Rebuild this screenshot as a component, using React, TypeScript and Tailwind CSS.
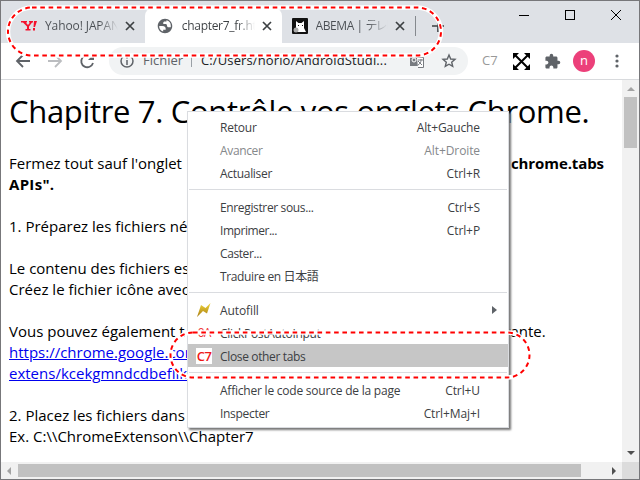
import React from "react";

type Item = { label: string; keys?: string; dim?: boolean; icon?: React.ReactNode; arrow?: boolean; hot?: boolean; ls: string };

const Bolt = () => (
  <svg width="16" height="16" viewBox="0 0 16 16">
    <defs><linearGradient id="gold" x1="0" x2="0" y1="0" y2="1"><stop stopColor="#f0d63c" /><stop offset="1" stopColor="#a87c12" /></linearGradient></defs>
    <path d="M5 3 9.500 6 14.500 1 11 11.500 7 9 1 15 5 3Z" fill="url(#gold)" />
  </svg>
);

const groups: Item[][] = [
  [
    { label: "Retour", keys: "Alt+Gauche", ls: "tracking-[-0.2px]" },
    { label: "Avancer", keys: "Alt+Droite", dim: true, ls: "tracking-[-0.35px]" },
    { label: "Actualiser", keys: "Ctrl+R", ls: "tracking-[-0.3px]" },
  ],
  [
    { label: "Enregistrer sous...", keys: "Ctrl+S", ls: "tracking-[-0.36px]" },
    { label: "Imprimer...", keys: "Ctrl+P", ls: "tracking-[-0.45px]" },
    { label: "Caster...", ls: "tracking-[-0.4px]" },
    { label: "Traduire en 日本語", ls: "tracking-[-0.36px]" },
  ],
  [
    { label: "Autofill", icon: <Bolt />, arrow: true, ls: "tracking-[-0.1px]" },
    { label: "ClickPostAutoInput", icon: <span className="text-[12px] tracking-[-1px] text-[#e33]">0A</span>, ls: "tracking-[-0.32px]" },
    { label: "Close other tabs", icon: <span className="flex h-4 w-4 items-center justify-center bg-white text-[13px] font-semibold leading-4 tracking-[-0.5px] text-[#f01818]">C7</span>, hot: true, ls: "tracking-[-0.35px]" },
  ],
  [
    { label: "Afficher le code source de la page", keys: "Ctrl+U", ls: "tracking-[-0.22px]" },
    { label: "Inspecter", keys: "Ctrl+Maj+I", ls: "tracking-[-0.3px]" },
  ],
];

function Menu() {
  return (
    <div className="absolute left-[186px] top-[110px] w-[322px] border border-[#dadce0] bg-white py-[3px] text-[12px] text-[#3c4043] shadow-[2px_2px_2px_#777]">
      {groups.map((g, i) => (
        <div key={i}>
          {i > 0 && <div className="mx-px h-[11px] pt-[5px]"><div className="h-px bg-[#dadce0]" /></div>}
          {g.map((it) => (
            <div key={it.label} className={`flex h-[23px] items-center pr-[28px] leading-[19px] ${it.hot ? "bg-[#c6c6c6]" : ""} ${it.dim ? "text-[#85888b]" : ""}`}>
              <span className="ml-2 flex w-4 shrink-0 justify-center">{it.icon}</span>
              <span className={`ml-2 whitespace-nowrap pt-px ${it.ls}`}>{it.label}</span>
              <span className="ml-auto whitespace-nowrap pt-px tracking-[-0.1px]">{it.keys}</span>
              {it.arrow && <svg className="-mr-[18px]" width="6" height="8"><path d="M0 0 5 4 0 8Z" fill="#5f6368" /></svg>}
            </div>
          ))}
        </div>
      ))}
    </div>
  );
}

const Cross = ({ className = "" }) => (
  <svg className={`shrink-0 ${className}`} width="10" height="10"><path d="M1 1 9 9M9 1 1 9" stroke="#3c4043" strokeWidth="1.7" /></svg>
);

const Globe = () => (
  <svg className="shrink-0" width="16" height="16" viewBox="1 1 22 22"><path fill="#5f6368" d="M12 2C6.48 2 2 6.48 2 12s4.48 10 10 10 10-4.48 10-10S17.52 2 12 2zM4 12h4.400c3.407.022 4.922 1.730 4.543 5.127H9.488v2.470A8.003 8.003 0 0 1 4 12zm16 0c0 .61-.07 1.210-.2 1.780h-2.600c-1.600 0-2.500-.9-2.500-2.500 0-1.100-.8-1.900-2-1.900H9.600V7.700c0-1.200.8-2 2-2h2.400V4.250A8 8 0 0 1 20 12z" /></svg>
);

function Tabs() {
  return (
    <div className="flex h-[42px] items-end bg-[#dee1e6]">
      <div className="flex h-[35px] w-[144px] items-center rounded-br-[8px] pl-[20px]">
        <svg className="shrink-0" width="16" height="10" viewBox="0 0 16 10"><path d="M0 0h6v1.500H4.800L7 4 9 1.500H8V0h4v1.500h-1L8 5.500V8h1.500v1.500h-5V8H6V5.500L2 1.500H0ZM13 0h3l-2 6h-1.500ZM12 7h2v2.500h-2Z" fill="#f5102c" /></svg>
        <span className="ml-2 w-[73px] overflow-hidden whitespace-nowrap bg-linear-to-r from-[#4a4e53] from-75% to-transparent bg-clip-text text-[12px] tracking-[-0.1px] text-transparent">Yahoo! JAPAN</span>
        <Cross className="ml-[7px]" />
      </div>
      <div className="flex h-[35px] w-[137px] items-center rounded-t-[8px] bg-white pl-[12px]">
        <Globe />
        <span className="ml-[9px] w-[73px] overflow-hidden whitespace-nowrap bg-linear-to-r from-[#3c4043] from-75% to-transparent bg-clip-text text-[12px] tracking-[-0.3px] text-transparent">chapter7_fr.html</span>
        <Cross className="ml-[7px]" />
      </div>
      <div className="flex h-[35px] w-[134px] items-center pl-[10px]">
        <svg className="shrink-0" width="16" height="16"><rect width="16" height="16" rx="1" fill="#111" /><path d="M4 3 6.500 5h3L12 3v7l2 4H3l1-4Z" fill="#fff" /><path d="M6 7h1v1H6zm4 0h1v1h-1z" fill="#111" /><circle cx="4" cy="12" r="2.500" fill="#aaa" /></svg>
        <span className="ml-2 w-[72px] overflow-hidden whitespace-nowrap bg-linear-to-r from-[#4a4e53] from-70% to-transparent bg-clip-text text-[12px] tracking-[-0.4px] text-transparent">ABEMA | <span className="tracking-[-2px]">テレビ</span></span>
        <Cross className="ml-[7px]" />
      </div>
      <div className="mb-[7px] h-5 w-px bg-[#85898e]" />
      <svg className="mb-[11px] ml-4" width="12" height="12"><path d="M6 0V12M0 6H12" stroke="#3c4043" strokeWidth="1.700" /></svg>
      <svg className="mb-[18px] ml-[75px]" width="120" height="18" fill="none" stroke="#000" shapeRendering="crispEdges"><path d="M0 8.500H10M46.500 3.500h9v9h-9Z" /><path d="m92 3 10 10m0-10L92 13" shapeRendering="auto" /></svg>
    </div>
  );
}

function Toolbar() {
  return (
    <div className="flex h-[37px] items-center border-b border-[#d8dadd] bg-white pl-[13px]">
      <svg className="shrink-0" width="86" height="18" fill="none" stroke="#5f6368" strokeWidth="1.800"><path d="M16 9H3M9 3 3 9l6 6" /><path d="M34 9h13m-6-6 6 6-6 6" stroke="#bbbdc0" /><path d="M77.500 5A6 6 0 1 0 79 11" /><path d="M80 2v6h-6Z" fill="#5f6368" stroke="none" /></svg>
      <div className="ml-[9px] flex h-7 w-[359px] shrink-0 items-center rounded-full bg-[#f1f3f4] pl-[11px] text-[13px] text-[#202124]">
        <svg className="shrink-0" width="14" height="14" fill="none" stroke="#5f6368" strokeWidth="1.500"><circle cx="7" cy="7" r="6" /><path d="M7 6v5M7 3v1.500" /></svg>
        <span className="ml-[9px] w-[41px] text-[#5f6368]">Fichier</span>
        <span className="ml-[7px] h-3 w-px bg-[#9aa0a6]" />
        <span className="ml-[9px] w-[188px] whitespace-nowrap tracking-[0.12px]">C:/Users/norio/AndroidStudi...</span>
        <svg className="ml-[20px] shrink-0" width="16" height="15"><path d="M1 1h7l3 11H1Z" fill="#777b80" /><path d="M8 3.500h6.500v10H9" fill="#fff" stroke="#777b80" /><path d="M9 6h5m-2-1v1c0 2-1 4-3 5m0-4 4 4" stroke="#777b80" fill="none" /><circle cx="5" cy="6" r="2" fill="none" stroke="#fff" /></svg>
        <svg className="ml-[16px] shrink-0" width="16" height="16" fill="none" stroke="#5f6368" strokeWidth="1.400"><path d="m8 2 1.700 4 4.300.4-3.300 2.800 1 4.200L8 11.200l-3.700 2.200 1-4.200L2 6.400 6.300 6Z" /></svg>
      </div>
      <span className="ml-[14px] w-4 text-[13px] text-[#999]">C7</span>
      <svg className="ml-[15px] shrink-0" width="17" height="17"><path d="M2 2 15 15M15 2 2 15" stroke="#000" strokeWidth="2" /><path d="M0 0h6L0 6ZM17 0v6l-6-6ZM0 17v-6l6 6ZM17 17h-6l6-6Z" /></svg>
      <svg className="ml-[14px] shrink-0" width="17" height="17" viewBox="0 0 24 24"><path fill="#5f6368" d="M20.500 11H19V7c0-1.100-.9-2-2-2h-4V3.500a2.500 2.500 0 0 0-5 0V5H4c-1.100 0-1.990.9-1.990 2v3.800H3.500c1.490 0 2.700 1.210 2.700 2.700s-1.210 2.700-2.700 2.700H2V20c0 1.100.9 2 2 2h3.800v-1.500c0-1.490 1.210-2.700 2.700-2.700s2.700 1.210 2.700 2.700V22H17c1.100 0 2-.9 2-2v-4h1.500a2.500 2.500 0 0 0 0-5z" /></svg>
      <span className="ml-[12px] flex h-[22px] w-[22px] shrink-0 items-center justify-center rounded-full bg-[#ec407a] pb-px text-[13px] text-white">n</span>
      <svg className="ml-[20px] shrink-0" width="4" height="14" fill="#5f6368"><circle cx="2" cy="2" r="1.600" /><circle cx="2" cy="7" r="1.600" /><circle cx="2" cy="12" r="1.600" /></svg>
    </div>
  );
}

function Page() {
  return (
    <main className="min-w-0 flex-1 overflow-hidden whitespace-nowrap pl-2 text-[15px] leading-[21px] text-black">
      <h1 className="pt-[9px] text-[31px] leading-[44px] tracking-[-0.32px]">Chapitre 7. Contrôle vos onglets Chrome.</h1>
      <div className="mt-5 flex"><span className="w-[502px]">Fermez tout sauf l'onglet</span><b className="tracking-[-0.1px]">chrome.tabs</b></div>
      <b className="tracking-[0.3px]">APIs".</b>
      <p className="mt-[21px]">1. Préparez les fichiers né</p>
      <p className="mt-[21px]">Le contenu des fichiers est</p>
      <p>Créez le fichier icône avec</p>
      <div className="mt-[21px] flex"><span className="w-[494px]">Vous pouvez également t</span><span>vante.</span></div>
      <p className="text-[#0000ee] underline">https://chrome.google.com</p>
      <p className="text-[#0000ee] underline">extens/kcekgmndcdbeflike</p>
      <p className="mt-[21px]">2. Placez les fichiers dans</p>
      <p>Ex. C:\\ChromeExtenson\\Chapter7</p>
    </main>
  );
}

const Callout = ({ d }: { d: string }) => (
  <g fill="none">
    <path d={d} stroke="#fff" strokeWidth="4.500" />
    <path d={d} stroke="#f00" strokeWidth="2" strokeDasharray="4.600 3.700" />
  </g>
);

export default function App() {
  return (
    <div className="relative flex h-[480px] w-[640px] flex-col overflow-hidden border border-[#77777a] bg-white font-['Open_Sans','Noto_Sans_CJK_JP',sans-serif]">
      <Tabs />
      <Toolbar />
      <div className="flex min-h-0 flex-1">
        <Page />
        <div className="flex w-[17px] flex-col items-center bg-[#f1f1f1]">
          <svg className="mt-[7px]" width="8" height="4"><path d="M0 4 4 0l4 4Z" fill="#a3a3a3" /></svg>
          <div className="mt-[6px] h-[51px] w-[13px] bg-[#c1c1c1]" />
          <svg className="mb-[7px] mt-auto" width="8" height="4"><path d="M0 0h8L4 4Z" fill="#505050" /></svg>
        </div>
      </div>
      <div className="flex h-[17px] items-center bg-[#f1f1f1]">
        <svg className="ml-[6px]" width="4" height="8"><path d="M4 0v8L0 4Z" fill="#a3a3a3" /></svg>
        <div className="ml-[7px] h-[13px] w-[563px] bg-[#c1c1c1]" />
        <svg className="ml-[31px]" width="4" height="8"><path d="M0 0v8l4-4Z" fill="#505050" /></svg>
        <div className="ml-auto h-[17px] w-[17px] bg-[#dcdcdc]" />
      </div>
      <Menu />
      <svg className="absolute -left-px -top-px" width="640" height="480">
        <Callout d="M32 7.500H417A24 24 0 0 1 417 55.500H32A24 24 0 0 1 32 7.500Z" />
        <Callout d="M193 332.500H507A22 22 0 0 1 507 377.500H193A22 22 0 0 1 193 332.500Z" />
      </svg>
    </div>
  );
}
